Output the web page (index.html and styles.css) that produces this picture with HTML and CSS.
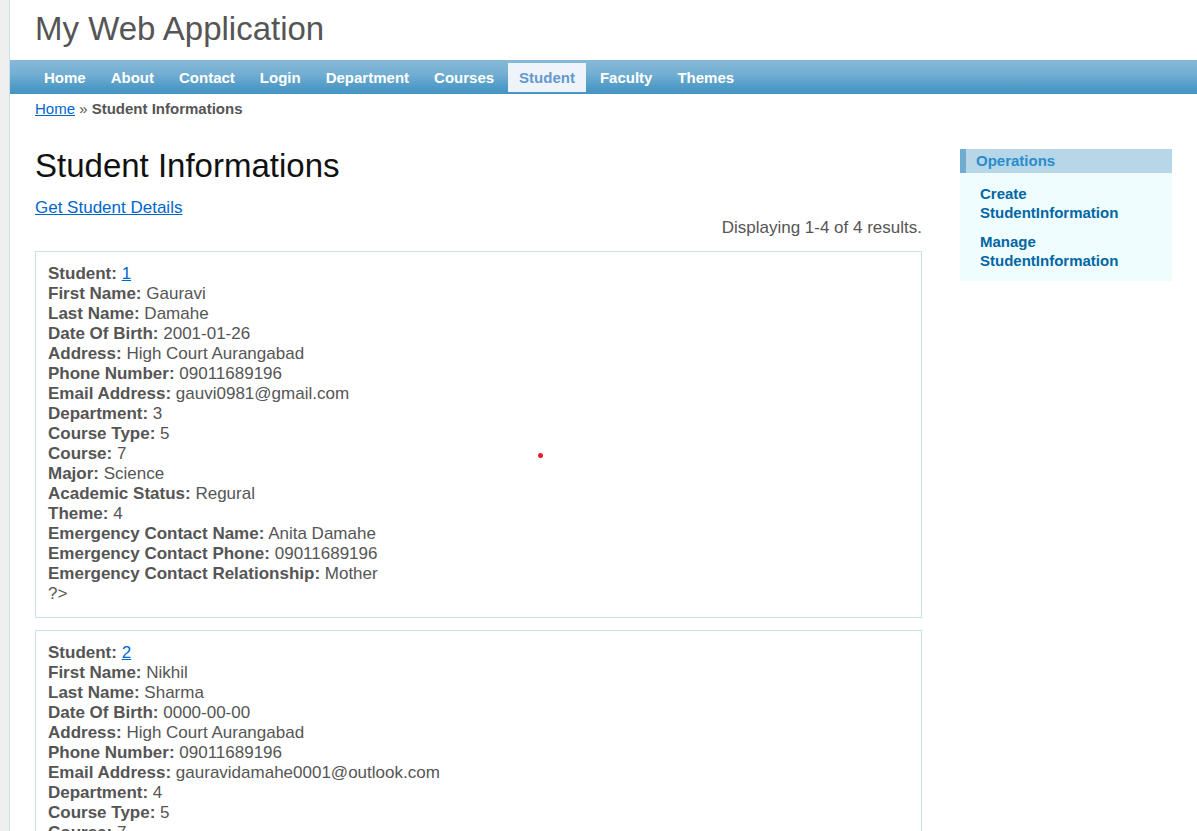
FILE: index.html
```
<!DOCTYPE html>
<html lang="en">
<head>
<meta charset="utf-8">
<title>My Web Application - Student Informations</title>
<link rel="stylesheet" href="styles.css">
</head>
<body>
<div class="page">
  <header class="header">My Web Application</header>
  <nav class="mainmenu">
    <a href="#">Home</a>
    <a href="#">About</a>
    <a href="#">Contact</a>
    <a href="#">Login</a>
    <a href="#">Department</a>
    <a href="#">Courses</a>
    <a href="#" class="active">Student</a>
    <a href="#">Faculty</a>
    <a href="#">Themes</a>
  </nav>
  <div class="breadcrumbs"><a href="#">Home</a> » <b>Student Informations</b></div>
  <div class="columns">
    <main class="content">
      <h1>Student Informations</h1>
      <a href="#" class="details">Get Student Details</a>
      <p class="summary">Displaying 1-4 of 4 results.</p>
      <article class="view">
        <div><b>Student:</b> <a href="#">1</a></div>
        <div><b>First Name:</b> Gauravi</div>
        <div><b>Last Name:</b> Damahe</div>
        <div><b>Date Of Birth:</b> 2001-01-26</div>
        <div><b>Address:</b> High Court Aurangabad</div>
        <div><b>Phone Number:</b> 09011689196</div>
        <div><b>Email Address:</b> gauvi0981@gmail.com</div>
        <div><b>Department:</b> 3</div>
        <div><b>Course Type:</b> 5</div>
        <div><b>Course:</b> 7</div>
        <div><b>Major:</b> Science</div>
        <div><b>Academic Status:</b> Regural</div>
        <div><b>Theme:</b> 4</div>
        <div><b>Emergency Contact Name:</b> Anita Damahe</div>
        <div><b>Emergency Contact Phone:</b> 09011689196</div>
        <div><b>Emergency Contact Relationship:</b> Mother</div>
        <div>?&gt;</div>
      </article>
      <article class="view">
        <div><b>Student:</b> <a href="#">2</a></div>
        <div><b>First Name:</b> Nikhil</div>
        <div><b>Last Name:</b> Sharma</div>
        <div><b>Date Of Birth:</b> 0000-00-00</div>
        <div><b>Address:</b> High Court Aurangabad</div>
        <div><b>Phone Number:</b> 09011689196</div>
        <div><b>Email Address:</b> gauravidamahe0001@outlook.com</div>
        <div><b>Department:</b> 4</div>
        <div><b>Course Type:</b> 5</div>
        <div><b>Course:</b> 7</div>
      </article>
    </main>
    <aside class="sidebar">
      <h2>Operations</h2>
      <ul>
        <li><a href="#">Create StudentInformation</a></li>
        <li><a href="#">Manage StudentInformation</a></li>
      </ul>
    </aside>
  </div>
</div>
<span class="marker"></span>
</body>
</html>
```
FILE: styles.css
```
* {
  box-sizing: border-box;
}

body {
  margin: 0;
  height: 100vh;
  overflow: hidden;
  padding-left: 9px;
  background: #efefef;
  color: #555;
  font: 17px/20px "Liberation Sans", Arial, sans-serif;
}

a {
  color: #06c;
}

.page {
  border-left: 1px solid #c9e0ed;
  background: #fff;
}

.header {
  padding: 9px 25px 11px;
  font-size: 33px;
  line-height: 40px;
}

.mainmenu {
  display: flex;
  gap: 3px;
  padding: 3px 23px 2px;
  background: linear-gradient(#86b9d8, #74afd2 40%, #4b98c6 85%, #4896c5);
}

.mainmenu a {
  padding: 5px 11px 4px;
  color: #fff;
  font-size: 15px;
  font-weight: bold;
  text-decoration: none;
}

.mainmenu .active {
  background: #eff4fa;
  color: #6399cd;
}

.breadcrumbs {
  padding: 5px 25px;
  font-size: 15px;
}

.columns {
  display: flex;
  align-items: flex-start;
  gap: 38px;
  padding: 0 25px;
}

.content {
  flex: 1;
}

h1 {
  margin: 22px 0 12px;
  color: #111;
  font-size: 33px;
  font-weight: normal;
  line-height: 40px;
}

.details {
  display: block;
  width: fit-content;
}

.summary {
  margin: 0 0 13px;
  text-align: right;
}

.view {
  margin-bottom: 12px;
  padding: 12px 12px 13px;
  border: 1px solid #c9e0ed;
}

.sidebar {
  width: 212px;
  margin-top: 25px;
  background: #effdff;
}

.sidebar h2 {
  margin: 0;
  padding: 2px 10px;
  border-left: 6px solid #6faccf;
  background: #b7d6e7;
  color: #298dcd;
  font-size: 15px;
  line-height: 20px;
}

.sidebar ul {
  display: grid;
  gap: 10px;
  margin: 0;
  padding: 11px 20px;
  list-style: none;
  font-size: 15px;
  font-weight: bold;
  line-height: 19px;
}

.sidebar a {
  color: #0066a4;
  text-decoration: none;
}

.marker {
  position: absolute;
  top: 453px;
  left: 538px;
  width: 5px;
  height: 5px;
  border-radius: 50%;
  background: #ed1c24;
}
```
